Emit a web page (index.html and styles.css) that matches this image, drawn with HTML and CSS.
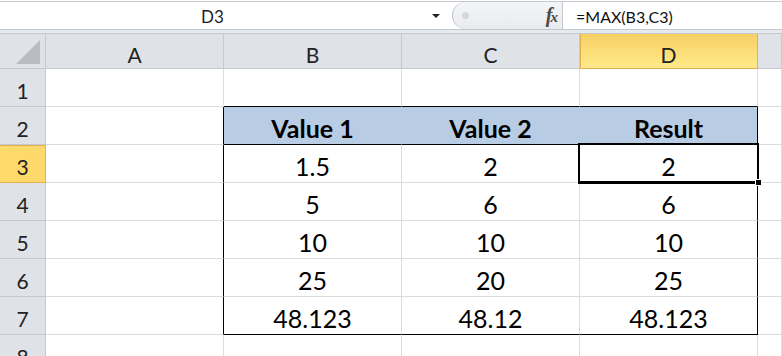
FILE: index.html
```html
<!DOCTYPE html>
<html>
<head>
<meta charset="utf-8">
<link rel="stylesheet" href="styles.css">
</head>
<body>
<div class="app">
  <div class="fbar">
    <div class="namebox"><span class="name">D3</span><span class="dd"></span></div>
    <div class="pill"><span class="dot"></span><span class="fx">f<span class="x">x</span></span></div>
    <div class="formula">=MAX(B3,C3)</div>
  </div>
  <div class="gap"></div>
  <div class="grid">
    <div class="hd corner"><span class="tri"></span></div>
    <div class="hd col">A</div>
    <div class="hd col">B</div>
    <div class="hd col">C</div>
    <div class="hd col sel">D</div>
    <div class="hd col"></div>

    <div class="hd row">1</div>
    <div class="c"></div><div class="c tt"></div><div class="c tt"></div><div class="c tt"></div><div class="c"></div>

    <div class="hd row">2</div>
    <div class="c tl"></div><div class="c th">Value 1</div><div class="c th">Value 2</div><div class="c th tr">Result</div><div class="c"></div>

    <div class="hd row rsel">3</div>
    <div class="c tl"></div><div class="c">1.5</div><div class="c">2</div><div class="c tr active">2<span class="handle"></span></div><div class="c"></div>

    <div class="hd row">4</div>
    <div class="c tl"></div><div class="c">5</div><div class="c">6</div><div class="c tr">6</div><div class="c"></div>

    <div class="hd row">5</div>
    <div class="c tl"></div><div class="c">10</div><div class="c">10</div><div class="c tr">10</div><div class="c"></div>

    <div class="hd row">6</div>
    <div class="c tl"></div><div class="c">25</div><div class="c">20</div><div class="c tr">25</div><div class="c"></div>

    <div class="hd row">7</div>
    <div class="c tl"></div><div class="c tb">48.123</div><div class="c tb">48.12</div><div class="c tb tr">48.123</div><div class="c"></div>

    <div class="hd row">8</div>
    <div class="c"></div><div class="c"></div><div class="c"></div><div class="c"></div><div class="c"></div>
  </div>
</div>
</body>
</html>
```
FILE: styles.css
```css
html, body {
  margin: 0;
  padding: 0;
  background: #ffffff;
  overflow: hidden;
}
.app {
  width: 782px;
  height: 356px;
  overflow: hidden;
  font-family: Lato, "Open Sans", sans-serif;
  color: #000;
}
.fbar {
  margin-top: 1px;
  height: 27px;
  border-top: 1px solid #c3c8ce;
  border-bottom: 1px solid #c3c8ce;
  display: flex;
  background: #fff;
}
.namebox {
  width: 452px;
  display: flex;
  align-items: center;
}
.name {
  width: 425px;
  text-align: center;
  font-size: 17px;
  color: #1e1e1e;
  padding-top: 1px;
}
.dd {
  width: 0;
  height: 0;
  border-left: 4px solid transparent;
  border-right: 4px solid transparent;
  border-top: 4px solid #222;
  margin-left: 7px;
}
.pill {
  width: 111px;
  background: linear-gradient(#f4f5f7, #e9ebee);
  border-left: 1px solid #b9bec4;
  border-right: 1px solid #c3c8ce;
  border-radius: 14px 0 0 14px;
  display: flex;
  align-items: center;
  justify-content: space-between;
  padding: 0 6px 0 9px;
  box-sizing: border-box;
}
.dot {
  width: 5px;
  height: 5px;
  border-radius: 50%;
  background: #d6d9dd;
  border: 1px solid #cdd1d6;
}
.fx {
  font-family: "Liberation Serif", serif;
  font-style: italic;
  font-weight: bold;
  font-size: 20px;
  color: #4a4a4a;
  letter-spacing: -2px;
}
.fx .x {
  font-size: 15px;
}
.formula {
  flex: 1;
  display: flex;
  align-items: center;
  padding-left: 13px;
  font-size: 16px;
  color: #111;
  padding-top: 1px;
}
.gap {
  height: 3px;
  background: #e8ebee;
  border-bottom: 1px solid #c3c8ce;
}
.grid {
  display: grid;
  grid-template-columns: 46px 178px 178px 178px 178px 24px;
  grid-template-rows: 35px repeat(8, 38px);
}
.grid > div {
  box-sizing: border-box;
  border-right: 1px solid #dadcdf;
  border-bottom: 1px solid #dadcdf;
  display: flex;
  align-items: center;
  justify-content: center;
}
.hd {
  background: #dfe3e8;
  font-size: 21px;
  color: #222;
}
.grid > .hd {
  border-right-color: #c5cad0;
  border-bottom-color: #c5cad0;
}
.hd.col,
.hd.row {
  padding-top: 6px;
}
.corner {
  position: relative;
}
.tri {
  position: absolute;
  right: 5px;
  bottom: 4px;
  width: 0;
  height: 0;
  border-left: 24px solid transparent;
  border-bottom: 24px solid #b9bdc2;
}
.grid > .hd.sel {
  background: linear-gradient(#f8d064, #feea8a);
  border-right-color: #e3b04c;
  border-bottom-color: #e3b04c;
  box-shadow: inset 1px 0 0 #e3b04c;
}
.grid > .hd.rsel {
  background: linear-gradient(90deg, #fedb6c, #fed86a);
  border-right-color: #e3b04c;
  border-bottom-color: #e3b04c;
  box-shadow: inset 0 1px 0 #e3b04c;
}
.c {
  font-size: 25px;
  padding-top: 4px;
}
.grid > .tt {
  border-bottom-color: #000;
}
.grid > .tl,
.grid > .tr {
  border-right-color: #000;
}
.grid > .tb {
  border-bottom-color: #000;
}
.grid > .th {
  background: #b8cce4;
  font-weight: bold;
  border-bottom-color: #000;
  border-right-color: #b8cce4;
}
.grid > .th.tr {
  border-right-color: #000;
}
.active {
  position: relative;
}
.active::after {
  content: "";
  position: absolute;
  left: -2px;
  top: -2px;
  right: -2px;
  bottom: -2px;
  border: 2px solid #000;
  border-bottom-width: 3px;
}
.handle {
  position: absolute;
  right: -5px;
  bottom: -4px;
  width: 5px;
  height: 5px;
  background: #000;
  border: 1px solid #fff;
  z-index: 2;
}
```
